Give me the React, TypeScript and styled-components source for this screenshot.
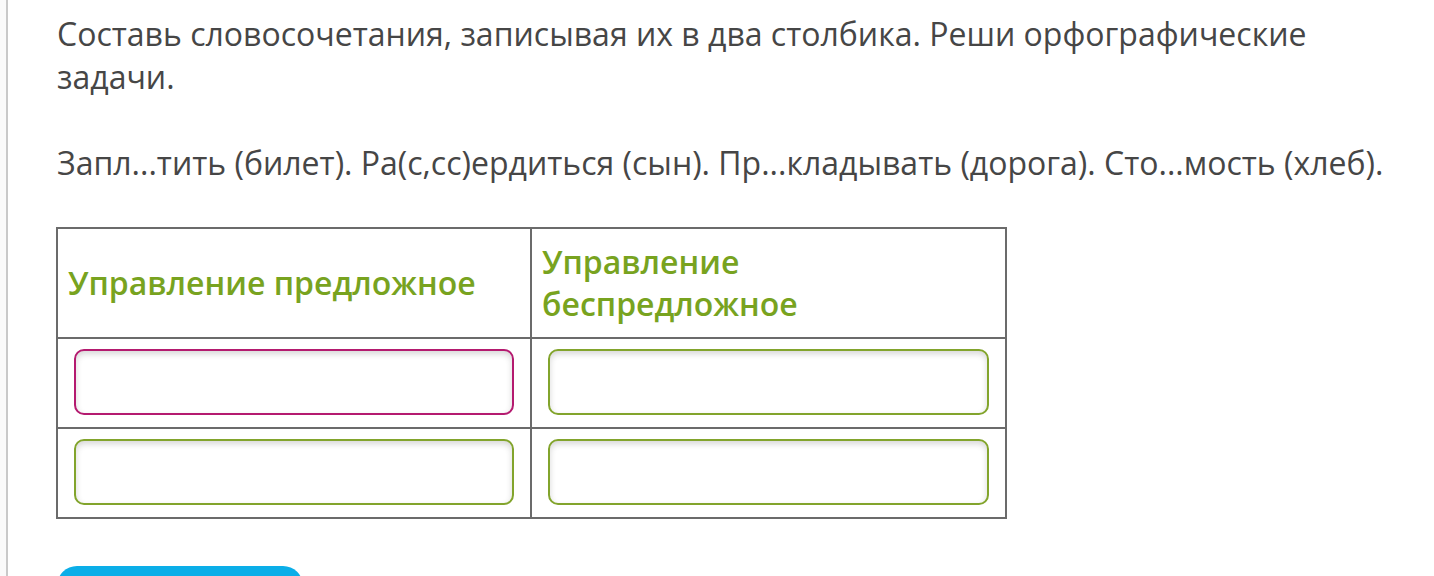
import React from 'react'
import styled, { createGlobalStyle } from 'styled-components'

const GlobalStyle = createGlobalStyle`
  html, body {
    margin: 0;
    padding: 0;
    background: #ffffff;
    overflow: hidden;
  }
  body {
    font-family: "Open Sans", "Noto Sans", sans-serif;
    color: #464646;
  }
`

const rows = [
  ['error', 'ok'],
  ['ok', 'ok'],
] as const

const App = () => {
  return (
    <>
      <GlobalStyle />
      <Page>
        <Rail />
        <Content>
          <Task>
            Составь словосочетания, записывая их в два столбика. Реши орфографические задачи.
          </Task>
          <Task>
            Запл...тить (билет). Ра(с,сс)ердиться (сын). Пр...кладывать (дорога). Сто...мость (хлеб).
          </Task>
          <Grid>
            <colgroup>
              <Column $width={474} />
              <Column />
            </colgroup>
            <thead>
              <tr>
                <HeadCell>Управление предложное</HeadCell>
                <HeadCell>Управление беспредложное</HeadCell>
              </tr>
            </thead>
            <tbody>
              {rows.map((row, i) => (
                <tr key={i}>
                  {row.map((state, j) => (
                    <Cell key={j}>
                      <Answer $state={state} type="text" />
                    </Cell>
                  ))}
                </tr>
              ))}
            </tbody>
          </Grid>
          <CheckButton type="button" />
        </Content>
      </Page>
    </>
  )
}

const Page = styled.div`
  display: flex;
  width: 1434px;
  height: 576px;
  overflow: hidden;
`

const Rail = styled.div`
  width: 6px;
  flex: none;
  background: #fafafa;
  border-right: 2px solid #c9c9c9;
`

const Content = styled.div`
  flex: 1;
  padding: 12px 0 0 49px;
`

const Task = styled.p`
  margin: 0 0 43px;
  max-width: 1340px;
  font-size: 32px;
  line-height: 43px;
  color: #464646;
`

const Grid = styled.table`
  border-collapse: collapse;
  width: 951px;
  margin: 2px 0 0 -1px;
  table-layout: fixed;
`

const Column = styled.col<{ $width?: number }>`
  width: ${p => (p.$width ? `${p.$width}px` : 'auto')};
`

const HeadCell = styled.th`
  border: 2px solid #6b6b6b;
  padding: 12px 10px 12px 10px;
  height: 84px;
  text-align: left;
  vertical-align: middle;
  font-size: 32px;
  line-height: 42px;
  font-weight: 600;
  color: #78a31f;
`

const Cell = styled.td`
  border: 2px solid #6b6b6b;
  padding: 10px 16px 12px 16px;
`

const Answer = styled.input<{ $state: 'error' | 'ok' }>`
  display: block;
  box-sizing: border-box;
  width: 100%;
  height: 66px;
  border: 2px solid ${p => (p.$state === 'error' ? '#b41a6f' : '#82a42c')};
  border-radius: 10px;
  background: #ffffff;
  box-shadow: inset 0 3px 6px rgba(0, 0, 0, 0.16);
  outline: none;
`

const CheckButton = styled.button`
  display: block;
  margin-top: 47px;
  width: 246px;
  height: 56px;
  border: none;
  border-radius: 20px;
  background: #0baee8;
`

export default App
